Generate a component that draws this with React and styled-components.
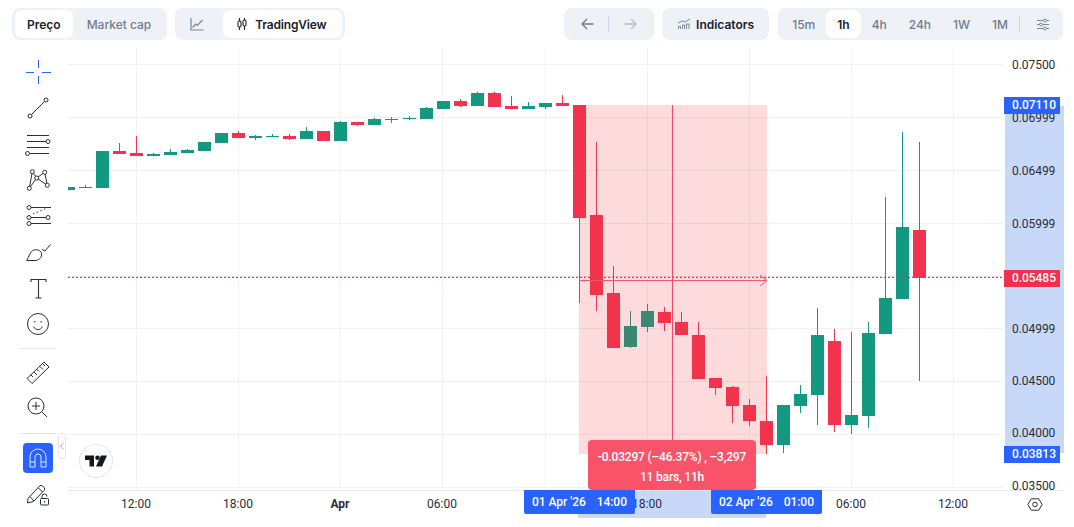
import React from "react";
import styled, { createGlobalStyle } from "styled-components";

const GREEN = "#12997f";
const RED = "#f2334f";
const BLUE = "#2962ff";
const INK = "#2a2e39";

// top, bottom of the body, high, low of the wick, up or down
const candles = [
  [187, 190, 187, 190, "u"], [187, 188, 185, 188, "u"], [151, 188, 151, 188, "u"], [151, 154, 143, 154, "d"],
  [153, 156, 136, 156, "d"], [154, 156, 153, 156, "u"], [152, 155, 149, 155, "u"], [150, 153, 149, 153, "u"],
  [142, 151, 142, 151, "u"], [133, 143, 133, 143, "u"], [133, 138, 131, 138, "d"], [136, 138, 135, 140, "u"],
  [136, 137, 134, 137, "u"], [136, 139, 134, 140, "d"], [131, 139, 127, 139, "u"], [131, 141, 131, 141, "d"],
  [122, 141, 121, 141, "u"], [122, 125, 122, 126, "d"], [119, 125, 118, 125, "u"], [119, 120, 117, 123, "d"],
  [118, 119, 116, 120, "u"], [108, 119, 107, 119, "u"], [101, 109, 101, 109, "u"], [101, 106, 99, 107, "d"],
  [93, 106, 92, 106, "u"], [93, 107, 92, 107, "d"], [106, 109, 96, 109, "d"], [106, 109, 102, 109, "u"],
  [103, 107, 103, 109, "u"], [103, 106, 95, 106, "d"], [105, 218, 105, 303, "d"], [215, 295, 142, 311, "d"],
  [293, 348, 266, 348, "d"], [326, 347, 311, 348, "u"], [311, 327, 304, 332, "u"], [312, 323, 307, 331, "d"],
  [322, 335, 312, 335, "d"], [335, 379, 322, 379, "d"], [378, 388, 378, 395, "d"], [387, 406, 386, 423, "d"],
  [405, 421, 399, 426, "d"], [421, 445, 376, 454, "d"], [405, 445, 405, 453, "u"], [394, 406, 385, 413, "u"],
  [335, 395, 308, 425, "u"], [341, 425, 329, 432, "d"], [415, 425, 332, 434, "u"], [333, 416, 322, 428, "u"],
  [298, 334, 197, 334, "u"], [227, 299, 132, 299, "u"], [230, 278, 142, 381, "d"],
];

const gridRows = [64.5, 117.5, 170.5, 223.5, 276.5, 328.5, 381.5, 434.5, 487.5];
const gridCols = [136.5, 238.5, 340.5, 442.5, 545.5, 647.5, 749.5, 851.5, 953.5];

const priceTicks = [
  ["0.07500", 65], ["0.06999", 118], ["0.06499", 171], ["0.05999", 224],
  ["0.04999", 329], ["0.04500", 381], ["0.04000", 433], ["0.03500", 486],
];

const timeTicks = [
  ["12:00", 136], ["18:00", 238], ["Apr", 340, true], ["06:00", 442],
  ["18:00", 647], ["06:00", 851], ["12:00", 953],
];

const GlobalStyle = createGlobalStyle`
  html, body { margin: 0; padding: 0; background: #fff; }
  body { font-family: Inter, "Liberation Sans", sans-serif; }
`;

const Page = styled.div`
  width: 1074px;
  height: 527px;
  display: flex;
  flex-direction: column;
  overflow: hidden;
  background: #fff;
`;

const Toolbar = styled.header`
  height: 48px;
  flex: none;
  box-sizing: border-box;
  padding: 8px 11px 8px 12px;
  display: flex;
  justify-content: space-between;
`;

const ToolbarSide = styled.div`
  display: flex;
  gap: 8px;
`;

const Group = styled.div`
  height: 32px;
  box-sizing: border-box;
  padding: 2px 3px;
  display: flex;
  align-items: center;
  background: #eef1f5;
  border-radius: 8px;
`;

const TimeframeGroup = styled(Group)`
  margin-left: 1px;
`;

const Tab = styled.button`
  height: 28px;
  border: 0;
  margin: 0;
  padding: ${(p) => p.$padding || "0 14px"};
  display: flex;
  align-items: center;
  gap: 8px;
  border-radius: 7px;
  font: ${(p) => (p.$active ? 600 : 500)} 12px Inter, sans-serif;
  color: ${(p) => (p.$active ? "#1a2230" : "#6f7d92")};
  background: ${(p) => (p.$active ? "#fff" : "transparent")};
`;

const ChartTypeTab = styled(Tab)`
  padding: 0 16px 0 14px;
  letter-spacing: -0.18px;
`;

const IndicatorsTab = styled(Tab)`
  padding: 0 12px;
  gap: 5px;
  font-weight: 600;
  color: #1a2230;
`;

const Separator = styled.span`
  width: 1px;
  height: 16px;
  background: #cdd5df;
  margin-right: ${(p) => p.$right || 0}px;
`;

const Body = styled.div`
  flex: 1;
  display: flex;
  min-height: 0;
`;

const Sidebar = styled.aside`
  width: 68px;
  flex: none;
  box-sizing: border-box;
  padding: 6px 12px 0 20px;
  display: flex;
  flex-direction: column;
  align-items: center;
  position: relative;
`;

const ToolCell = styled.div`
  width: 36px;
  height: 36px;
  flex: none;
  display: flex;
  align-items: center;
  justify-content: center;
`;

const ToolRule = styled.hr`
  width: 36px;
  height: 1px;
  flex: none;
  border: 0;
  background: #e0e3e8;
  margin: ${(p) => p.$margin};
`;

const MagnetButton = styled.div`
  width: 30px;
  height: 30px;
  flex: none;
  margin-bottom: 2px;
  display: flex;
  align-items: center;
  justify-content: center;
  background: ${BLUE};
  border-radius: 4px;
`;

const CollapseHandle = styled.div`
  position: absolute;
  left: 58px;
  top: 385px;
  width: 8px;
  height: 26px;
  box-sizing: border-box;
  border: 1px solid #e3e6ea;
  border-radius: 3px;
  background: #fff;
  display: flex;
  align-items: center;
  justify-content: center;
`;

const Chart = styled.main`
  flex: 1;
  position: relative;
  overflow: hidden;
`;

const ChartCanvas = styled.svg`
  display: block;
  position: absolute;
  left: 0;
  top: 0;
`;

const LogoBadge = styled.div`
  position: absolute;
  left: 11px;
  top: 396px;
  width: 34px;
  height: 34px;
  box-sizing: border-box;
  border: 1px solid #e4e6e9;
  border-radius: 50%;
  background: #fff;
  display: flex;
  align-items: center;
  justify-content: center;
`;

const PriceAxis = styled.div`
  position: absolute;
  left: 936px;
  top: 0;
  width: 70px;
  height: 442px;
  overflow: hidden;
`;

const PriceTick = styled.span`
  position: absolute;
  left: 8px;
  top: ${(p) => p.$y - 48 - 8}px;
  font: 400 12px/16px Roboto, sans-serif;
  color: #2a2e39;
  letter-spacing: -0.05px;
`;

const PricePill = styled.span`
  position: absolute;
  left: 0;
  top: ${(p) => p.$y - 48}px;
  width: 56px;
  height: 17px;
  box-sizing: border-box;
  padding-left: 8px;
  font: 500 12px/17px Roboto, sans-serif;
  color: #fff;
  letter-spacing: -0.05px;
  background: ${(p) => p.$bg};
`;

const TimeTick = styled.span`
  position: absolute;
  left: ${(p) => p.$x - 68 - 25}px;
  top: 448px;
  width: 50px;
  text-align: center;
  font: ${(p) => (p.$bold ? 700 : 400)} 12px/16px Roboto, sans-serif;
  color: #2a2e39;
`;

const DatePill = styled.span`
  position: absolute;
  left: ${(p) => p.$x - 68}px;
  top: 442px;
  width: 111px;
  height: 24px;
  display: flex;
  align-items: center;
  justify-content: center;
  gap: 11px;
  background: ${BLUE};
  color: #fff;
  font: 500 12px Roboto, sans-serif;
  letter-spacing: -0.05px;
  border-radius: 0 0 2px 2px;
`;

const MeasureTip = styled.div`
  position: absolute;
  left: 520px;
  top: 392px;
  width: 168px;
  height: 50px;
  box-sizing: border-box;
  padding-top: 7px;
  border-radius: 4px;
  background: #f9536a;
  color: #fff;
  text-align: center;
  font: 500 12px/20px Roboto, sans-serif;
  letter-spacing: -0.18px;
`;

const SettingsButton = styled.div`
  position: absolute;
  left: 958px;
  top: 447px;
  width: 18px;
  height: 18px;
  display: flex;
  align-items: center;
  justify-content: center;
`;

const Glyph = ({ size = 26, children, color = INK, width = 1 }) => (
  <svg width={size} height={size} viewBox={`0 0 ${size} ${size}`} fill="none" stroke={color} strokeWidth={width}>
    {children}
  </svg>
);

const AreaIcon = () => (
  <svg width="14" height="14" viewBox="0 0 14 14" fill="none" stroke="#7b889b" strokeWidth="1.2">
    <path d="M1 1v12h12.5M2.5 10.5 6 7l1.5 1.5L12.5 3" />
  </svg>
);

const CandleIcon = () => (
  <svg width="10" height="14" viewBox="0 0 10 14" fill="none" stroke="#1a2230" strokeWidth="1.1">
    <path d="M2.5 1v3M2.5 10v3M7.5 1v2M7.5 9v4" />
    <rect x="1" y="4" width="3" height="6" rx="1.2" />
    <rect x="6" y="3" width="3" height="6" rx="1.2" />
  </svg>
);

const ArrowIcon = ({ flip, color }) => (
  <svg width="13" height="12" viewBox="0 0 13 12" fill="none" stroke={color} strokeWidth="1.3"
    style={flip ? { transform: "scaleX(-1)" } : undefined}>
    <path d="M12.5 6H1M6 1 1 6l5 5" />
  </svg>
);

const IndicatorIcon = () => (
  <svg width="14" height="12" viewBox="0 0 14 12" fill="none" stroke="#7b889b" strokeWidth="1">
    <path d="M1 5 5 3l3 1 5-3" />
    <path d="M1.5 11V8.5h2V11M5.5 11V7h2v4M9.5 11V6h2.5v5" />
  </svg>
);

const SlidersIcon = () => (
  <svg width="12" height="13" viewBox="0 0 12 13" fill="none" stroke="#7b889b" strokeWidth="1">
    <path d="M0 2.5h6.500M9.500 2.5H12M0 6.500h2.500M5.500 6.500H12M0 10.500h6.500M9.500 10.500H12" />
    <circle cx="8" cy="2.500" r="1.500" />
    <circle cx="4" cy="6.500" r="1.500" />
    <circle cx="8" cy="10.500" r="1.500" />
  </svg>
);

const Crosshair = () => (
  <Glyph color={BLUE} width={1}>
    <path d="M1 13.500h8M17 13.500h9M13.500 1v8M13.500 17v8" />
  </Glyph>
);

const TrendLine = () => (
  <Glyph>
    <path d="M6.500 19.500 19.500 6.500" />
    <circle cx="5" cy="21" r="2" />
    <circle cx="21" cy="5" r="2" />
  </Glyph>
);

const FibLines = () => (
  <Glyph>
    <path d="M2 4.500h22M2 10.500h20M2 16.500h22M5 22.500h19" />
    <circle cx="23" cy="10.500" r="2" fill="#fff" />
    <circle cx="2.500" cy="22.500" r="2" fill="#fff" />
  </Glyph>
);

const netPoints = [[7.3, 4.7], [19.7, 5.3], [11.7, 11], [4.3, 21.3], [22.3, 18.3]];

const PatternNet = () => (
  <Glyph>
    <path d="M7.300 4.700 4.300 21.300 11.700 11 7.300 4.700M11.700 11 19.700 5.300 22.300 18.300 11.700 11" />
    {netPoints.map(([cx, cy]) => <circle key={cx} cx={cx} cy={cy} r="2" fill="#fff" />)}
  </Glyph>
);

const Forecast = () => (
  <Glyph>
    <path d="M6 4.500h20M6 14.500h15M6 20.500h20" />
    <path d="M8 11 22 5" strokeDasharray="1.5 2.5" />
    <circle cx="4" cy="4.500" r="2" />
    <circle cx="4" cy="14.500" r="2" />
    <circle cx="23" cy="14.500" r="2" />
    <circle cx="4" cy="20.500" r="2" />
  </Glyph>
);

const Brush = () => (
  <Glyph>
    <path d="M1.700 21.500C4 18 5 12 9 11c4-1 8 1 7.700 5-.2 3-3.700 5.500-6.700 5.500Z" />
    <path d="M16.700 10.300 20 12l5.500-6.500" />
  </Glyph>
);

const TextTool = () => (
  <Glyph width={1.1}>
    <path d="M6 7V4.500h15V7M13.500 4.500V23M10.500 23h6" />
  </Glyph>
);

const Smiley = () => (
  <Glyph>
    <circle cx="13" cy="13" r="10.500" />
    <path d="M8.500 15.500c1 2 2.500 3 4.500 3s3.500-1 4.500-3" />
    <circle cx="9.800" cy="10.800" r=".8" fill={INK} stroke="none" />
    <circle cx="16.200" cy="10.800" r=".8" fill={INK} stroke="none" />
  </Glyph>
);

const Ruler = () => (
  <Glyph>
    <path d="M2 19.500 19 3l5 5L7 24.500Z" />
    <path d="M6 16l2 2M9 13l3 3M12 10.500l2 2M15 7.500l3 3M18 5l2 2" />
  </Glyph>
);

const ZoomIn = () => (
  <Glyph>
    <circle cx="11" cy="11" r="8" />
    <path d="M7 11h8M11 7v8M17 17l5 5" />
  </Glyph>
);

const Magnet = () => (
  <svg width="18" height="20" viewBox="0 0 18 20" fill="none" stroke="#dfe8ff" strokeWidth="1">
    <path d="M1 19V9a8 8 0 0 1 16 0v10h-5V9a3 3 0 0 0-6 0v10ZM1 14h5M12 14h5" />
  </svg>
);

const PencilLock = () => (
  <Glyph>
    <path d="M3 18.500 14.500 6a2 2 0 0 1 3 0l1.500 1.500a2 2 0 0 1 0 3L8.500 21.500 2.500 23ZM5 16.500l4 4.500M13.500 8l4 4" />
    <rect x="15.500" y="18.500" width="8" height="6.500" rx="1" fill="#fff" />
    <path d="M17 18.500v-2a2.500 2.500 0 0 1 5 0M19.500 21v1.500" />
  </Glyph>
);

const CandleSeries = () =>
  candles.map(([top, bottom, high, low, dir], i) => {
    const x = Math.round(61.9 + 17.03 * i);
    const fill = dir === "u" ? GREEN : RED;
    return (
      <g key={i} fill={fill}>
        <rect x={x + 6} y={high} width="1" height={low - high} />
        <rect x={x} y={top} width="13" height={bottom - top} />
      </g>
    );
  });

const PriceChart = () => (
  <ChartCanvas width="1006" height="479" viewBox="68 48 1006 479" shapeRendering="crispEdges">
    <g stroke="#f0f1f3" strokeWidth="1">
      {gridRows.map((y) => <line key={y} x1="68" x2="1003" y1={y} y2={y} />)}
      {gridCols.map((x) => <line key={x} x1={x} x2={x} y1="48" y2="490" />)}
    </g>
    <line x1="68" x2="1064" y1="490.5" y2="490.5" stroke="#e6e8eb" />
    <rect x="1005" y="106" width="59" height="347" fill="#c8d8f8" />
    <rect x="578" y="491" width="188" height="27" fill="#c8d8f8" />
    <CandleSeries />
    <rect x="579" y="105" width="188" height="349" fill="rgba(242, 54, 69, 0.18)" />
    <line x1="68" x2="1003" y1="277.3" y2="277.3" stroke={RED} strokeWidth="1.2" strokeDasharray="2 2" shapeRendering="auto" />
    <line x1="672.5" x2="672.5" y1="105" y2="440" stroke="#ee4a63" />
    <g shapeRendering="auto" stroke="#f2566c" fill="none">
      <path d="M579 280.500h187M760 275l7 5.500-7 5.500" />
    </g>
  </ChartCanvas>
);

export default function App() {
  return (
    <Page>
      <GlobalStyle />
      <Toolbar>
        <ToolbarSide>
          <Group>
            <Tab $active $padding="0 12px">Preço</Tab>
            <Tab $padding="0 13px 0 14px">Market cap</Tab>
          </Group>
          <Group>
            <Tab $padding="0 19px 0 12px"><AreaIcon /></Tab>
            <ChartTypeTab $active><CandleIcon />TradingView</ChartTypeTab>
          </Group>
        </ToolbarSide>
        <ToolbarSide>
          <Group>
            <Tab><ArrowIcon color="#6f7d92" /></Tab>
            <Separator $right={1} />
            <Tab><ArrowIcon flip color="#b4bdca" /></Tab>
          </Group>
          <Group>
            <IndicatorsTab><IndicatorIcon />Indicators</IndicatorsTab>
          </Group>
          <TimeframeGroup>
            {["15m", "1h", "4h", "24h", "1W", "1M"].map((t) => (
              <Tab key={t} $padding="0 11px" $active={t === "1h"}>{t}</Tab>
            ))}
            <Separator />
            <Tab $padding="0 11px 0 17px"><SlidersIcon /></Tab>
          </TimeframeGroup>
        </ToolbarSide>
      </Toolbar>
      <Body>
        <Sidebar>
          <ToolCell><Crosshair /></ToolCell>
          <ToolCell><TrendLine /></ToolCell>
          <ToolCell><FibLines /></ToolCell>
          <ToolCell><PatternNet /></ToolCell>
          <ToolCell><Forecast /></ToolCell>
          <ToolCell><Brush /></ToolCell>
          <ToolCell><TextTool /></ToolCell>
          <ToolCell><Smiley /></ToolCell>
          <ToolRule $margin="6px 0 5px" />
          <ToolCell><Ruler /></ToolCell>
          <ToolCell><ZoomIn /></ToolCell>
          <ToolRule $margin="7px 0 9px" />
          <MagnetButton><Magnet /></MagnetButton>
          <ToolCell><PencilLock /></ToolCell>
          <CollapseHandle>
            <svg width="4" height="8" viewBox="0 0 4 8" fill="none" stroke="#a9b1bd" strokeWidth="1">
              <path d="M3.500 .5 .5 4l3 3.500" />
            </svg>
          </CollapseHandle>
        </Sidebar>
        <Chart>
          <PriceChart />
          <LogoBadge>
            <svg width="22" height="12" viewBox="0 0 22 12" fill="#131722">
              <path d="M0 .5h9v11H4.500V5H0Z" />
              <circle cx="12.500" cy="2.800" r="2.300" />
              <path d="M16 .5h6l-5 11h-6Z" />
            </svg>
          </LogoBadge>
          <PriceAxis>
            {priceTicks.map(([label, y]) => <PriceTick key={label} $y={y}>{label}</PriceTick>)}
            <PricePill $y={97} $bg={BLUE}>0.07110</PricePill>
            <PricePill $y={270} $bg="#f0314d">0.05485</PricePill>
            <PricePill $y={446} $bg={BLUE}>0.03813</PricePill>
          </PriceAxis>
          {timeTicks.map(([label, x, bold]) => <TimeTick key={label + x} $x={x} $bold={bold}>{label}</TimeTick>)}
          <DatePill $x={524}><span>01 Apr '26</span><span>14:00</span></DatePill>
          <DatePill $x={711}><span>02 Apr '26</span><span>01:00</span></DatePill>
          <MeasureTip>
            -0.03297 (–46.37%) , –3,297
            <br />
            11 bars, 11h
          </MeasureTip>
          <SettingsButton>
            <svg width="16" height="13" viewBox="0 0 16 13" fill="none" stroke={INK} strokeWidth="1">
              <path d="M.8 6.500 4.300 .8h7.400l3.500 5.700-3.500 5.700H4.300Z" />
              <circle cx="8" cy="6.500" r="2.300" />
            </svg>
          </SettingsButton>
        </Chart>
      </Body>
    </Page>
  );
}
